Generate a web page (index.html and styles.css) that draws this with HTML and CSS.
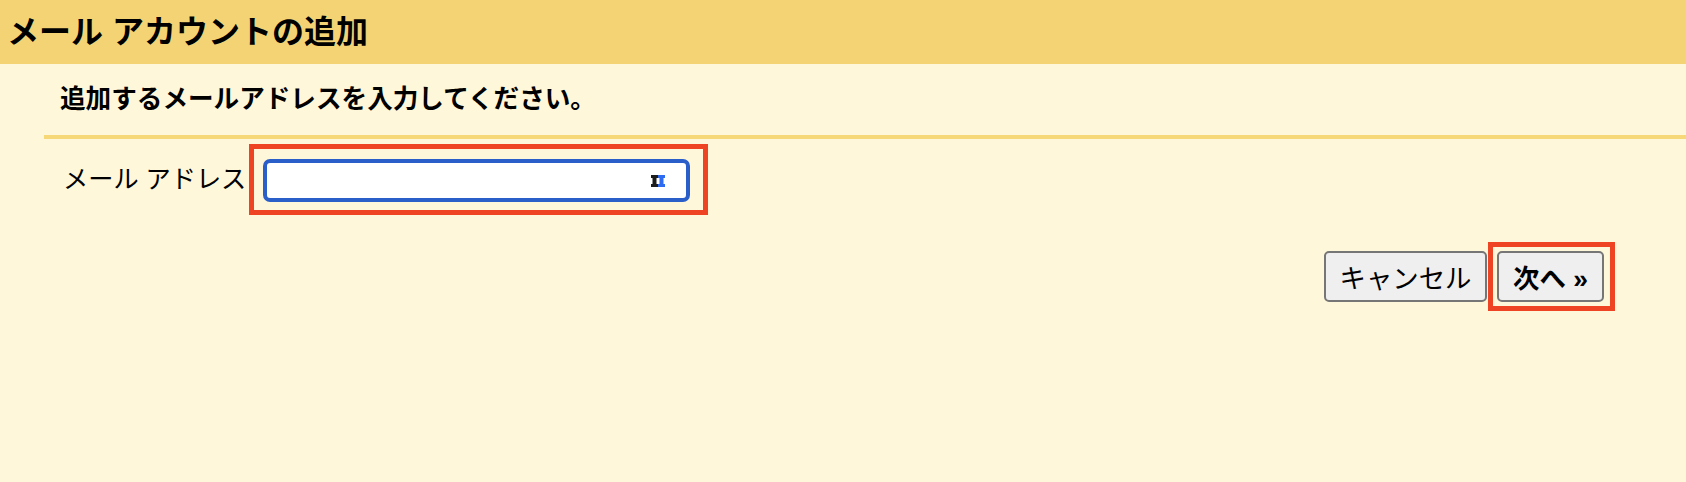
FILE: index.html
```html
<!DOCTYPE html>
<html lang="ja">
<head>
<meta charset="utf-8">
<title>メール アカウントの追加</title>
<link rel="stylesheet" href="styles.css">
</head>
<body>
<header class="title-bar"><h1 class="title">メール アカウントの追加</h1></header>
<main class="content">
  <div class="intro"><p class="intro-text">追加するメールアドレスを入力してください。</p></div>
  <div class="field-row">
    <label class="field-label" for="email">メール アドレス</label>
    <div class="mark mark-field">
      <div class="input-box">
        <input class="input" id="email" type="text">
        <svg class="input-icon" width="14" height="12" viewBox="0 0 14 12" aria-hidden="true">
          <path fill="#1c1c1c" d="M0 0h7v3H5.500v6H7v3H0V9h1.500V3H0z"/>
          <path fill="#2f6bf0" d="M7 0h7v3h-1.500v6H14v3H7V9h1.500V3H7z"/>
        </svg>
      </div>
    </div>
  </div>
  <div class="actions">
    <button class="btn" type="button">キャンセル</button>
    <div class="mark mark-btn"><button class="btn btn-next" type="button">次へ »</button></div>
  </div>
</main>
</body>
</html>
```

FILE: styles.css
```css
html, body {
  margin: 0;
  height: 100%;
  background: #fff7da;
}
body {
  font-family: "Liberation Sans", "Noto Sans CJK JP", sans-serif;
  color: #000;
  overflow: hidden;
}
.title-bar {
  height: 64px;
  background: #f4d375;
  display: flex;
  align-items: center;
  padding-left: 7px;
}
.title {
  margin: 0;
  font-size: 32px;
  font-weight: 700;
  line-height: 1;
}
.content {
  padding-left: 44px;
}
.intro {
  height: 75px;
  box-sizing: border-box;
  border-bottom: 4px solid #f6d878;
  padding: 20px 0 0 16px;
}
.intro-text {
  margin: 0;
  font-size: 25.6px;
  font-weight: 700;
  line-height: 30px;
}
.field-row {
  display: flex;
  align-items: flex-start;
  margin-top: 5px;
  padding-left: 20px;
}
.field-label {
  width: 185px;
  font-size: 25.2px;
  line-height: 30px;
  margin-top: 20px;
  margin-left: -1px;
  margin-right: 1px;
  white-space: nowrap;
}
.mark {
  box-sizing: border-box;
  border: 5px solid #ee4423;
}
.mark-field {
  width: 459px;
  height: 71px;
  padding: 10px 0 0 9px;
}
.input-box {
  position: relative;
  width: 427px;
  height: 43px;
}
.input {
  box-sizing: border-box;
  display: block;
  width: 100%;
  height: 100%;
  border: 4px solid #2a5fc9;
  border-radius: 7px;
  background: #fff;
  outline: none;
  padding: 0 8px;
}
.input-icon {
  position: absolute;
  left: 388px;
  top: 16px;
}
.actions {
  display: flex;
  justify-content: flex-end;
  align-items: flex-start;
  margin-top: 27px;
  padding-right: 71px;
}
.btn {
  box-sizing: border-box;
  height: 51px;
  margin: 9px 1px 0 0;
  border: 2px solid #767676;
  border-radius: 5px;
  background: #efefef;
  color: #000;
  font-family: inherit;
  font-size: 26.4px;
  padding: 0;
  width: 163px;
}
.mark-btn {
  width: 127px;
  height: 69px;
  padding: 4px 0 0 4px;
}
.btn-next {
  display: block;
  width: 107px;
  margin: 0;
  font-weight: 700;
}
```
